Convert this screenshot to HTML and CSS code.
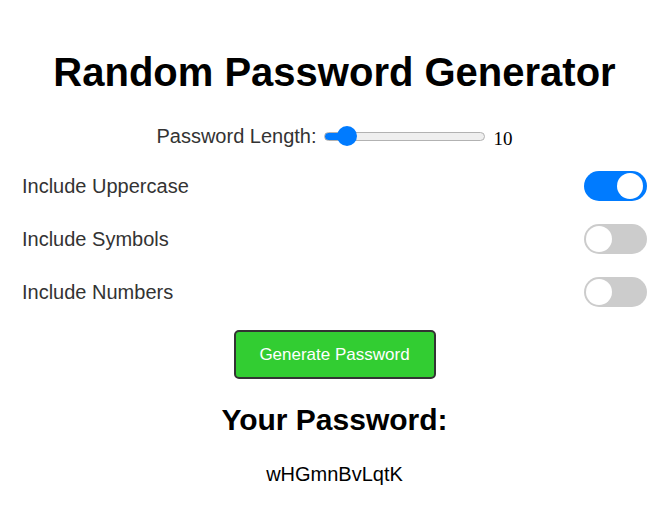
FILE: index.html
```html
<!DOCTYPE html>
<html>
<head>
<meta charset="utf-8">
<link rel="stylesheet" href="styles.css">
</head>
<body>
<div class="app">
  <h1 class="title">Random Password Generator</h1>
  <div class="length-row">
    <label class="length-label" for="len">Password Length:</label>
    <input class="slider" id="len" type="range" min="1" max="100" value="10">
    <span class="length-value">10</span>
  </div>
  <div class="option first">
    <span class="option-label">Include Uppercase</span>
    <span class="toggle on"><span class="knob"></span></span>
  </div>
  <div class="option">
    <span class="option-label">Include Symbols</span>
    <span class="toggle"><span class="knob"></span></span>
  </div>
  <div class="option">
    <span class="option-label">Include Numbers</span>
    <span class="toggle"><span class="knob"></span></span>
  </div>
  <div class="actions">
    <button class="generate">Generate Password</button>
  </div>
  <h2 class="result-title">Your Password:</h2>
  <p class="result">wHGmnBvLqtK</p>
</div>
</body>
</html>
```

FILE: styles.css
```css
html, body {
  margin: 0;
  padding: 0;
  background: #fff;
}
.app {
  font-family: "Liberation Sans", Arial, sans-serif;
  color: #333;
  padding: 0 23px 0 22px;
}
.title {
  margin: 0;
  padding-top: 49px;
  font-size: 40px;
  line-height: 46px;
  font-weight: bold;
  color: #000;
  text-align: center;
}
.length-row {
  display: flex;
  align-items: center;
  justify-content: center;
  margin-top: 29px;
  height: 24px;
}
.length-label {
  font-size: 20px;
  margin-right: 7px;
}
.slider {
  -webkit-appearance: none;
  appearance: none;
  width: 161px;
  height: 9px;
  margin: 0;
  border: 1px solid #b2b2b2;
  border-radius: 5px;
  background: linear-gradient(#007bff, #007bff) 0 0 / 22px 100% no-repeat, #efefef;
  box-sizing: border-box;
  outline: none;
}
.slider::-webkit-slider-thumb {
  -webkit-appearance: none;
  appearance: none;
  width: 20px;
  height: 20px;
  border-radius: 50%;
  background: #007bff;
  border: none;
}
.length-value {
  font-family: "Liberation Serif", "Times New Roman", serif;
  font-size: 19px;
  color: #000;
  margin-left: 9px;
  margin-top: 6px;
}
.option {
  display: flex;
  justify-content: space-between;
  align-items: center;
  height: 30px;
  margin-top: 23px;
}
.option.first {
  margin-top: 23px;
}
.option-label {
  font-size: 20px;
}
.toggle {
  position: relative;
  width: 63px;
  height: 30px;
  border-radius: 15px;
  background: #ccc;
  display: block;
}
.toggle.on {
  background: #007bff;
}
.knob {
  position: absolute;
  top: 2px;
  left: 2px;
  width: 26px;
  height: 26px;
  border-radius: 50%;
  background: #fff;
}
.toggle.on .knob {
  left: auto;
  right: 4px;
}
.actions {
  display: flex;
  justify-content: center;
  margin-top: 23px;
}
.generate {
  width: 202px;
  height: 49px;
  background: #32cd32;
  color: #fff;
  border: 2px solid #333;
  border-radius: 5px;
  font-family: "Liberation Sans", Arial, sans-serif;
  font-size: 17px;
  cursor: pointer;
}
.result-title {
  margin: 0;
  margin-top: 23px;
  font-size: 30px;
  line-height: 36px;
  color: #000;
  text-align: center;
}
.result {
  margin: 0;
  margin-top: 24px;
  font-size: 20px;
  line-height: 24px;
  text-align: center;
  color: #000;
}
```
